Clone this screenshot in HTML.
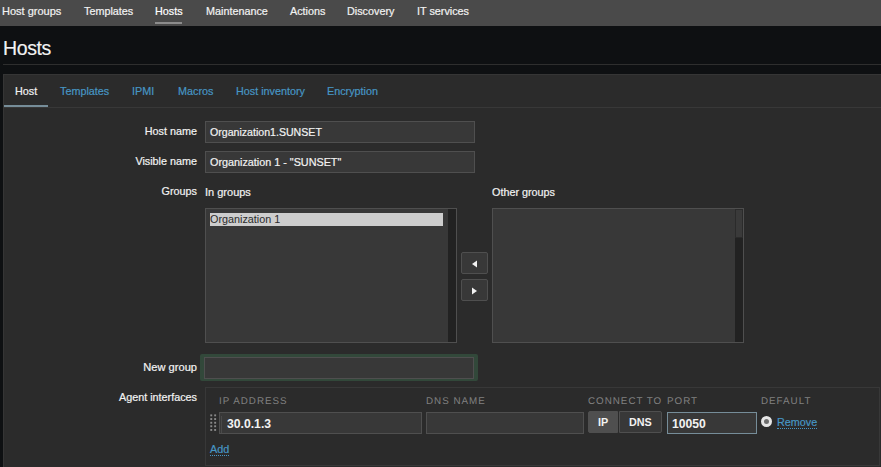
<!DOCTYPE html>
<html><head><meta charset="utf-8">
<style>
*{box-sizing:border-box;margin:0;padding:0}
html,body{width:881px;height:467px;overflow:hidden;background:#0e1012;font-family:"Liberation Sans",sans-serif;font-size:10.8px;color:#f2f2f2}
.a{position:absolute;white-space:nowrap;line-height:13px;-webkit-text-stroke:0.2px currentColor}
.r{position:absolute}
#nav{position:absolute;left:0;top:0;width:881px;height:26px;background:#4a4a4a}
#nav .a{top:5px;color:#f2f2f2}
#navsel{position:absolute;left:155px;top:22px;width:27px;height:2px;background:#8c8c8c}
#title{position:absolute;left:3px;top:37px;font-size:19.5px;line-height:22px;color:#f2f2f2;letter-spacing:-0.4px;-webkit-text-stroke:0.15px #f2f2f2}
#tline{position:absolute;left:3px;top:64px;width:878px;height:1px;background:#2e2e2e}
#cont{position:absolute;left:3px;top:74px;width:900px;height:420px;background:#2b2b2b;border:1px solid #353535}
.tab{top:85px;color:#4796c4}
#tabsel{position:absolute;left:4px;top:105px;width:44px;height:2px;background:#768d99}
#tabline{position:absolute;left:4px;top:107px;width:877px;height:1px;background:#383838}
.lbl{color:#f2f2f2}
.inp{position:absolute;background:#383838;border:1px solid #4f4f4f}
.list{position:absolute;background:#383838;border:1px solid #4f4f4f}
.btn{position:absolute;background:#383838;border:1px solid #4f4f4f;border-radius:2px}
.hdr{color:#808080;font-size:9.8px;letter-spacing:1px;text-rendering:geometricPrecision;-webkit-text-stroke:0}
.link{color:#4796c4;border-bottom:1px dotted #4796c4;line-height:12px}
.val{font-size:12.2px;font-weight:bold;-webkit-text-stroke:0}
</style></head><body>
<div id="nav">
  <div class="a" style="left:2px;font-size:11px">Host groups</div>
  <div class="a" style="left:84px">Templates</div>
  <div class="a" style="left:155px;color:#fff">Hosts</div>
  <div class="a" style="left:206px">Maintenance</div>
  <div class="a" style="left:290px">Actions</div>
  <div class="a" style="left:347px">Discovery</div>
  <div class="a" style="left:417px">IT services</div>
</div>
<div id="navsel"></div>
<div id="title">Hosts</div>
<div id="tline"></div>
<div id="cont"></div>
<div class="a tab" style="left:15px;color:#f2f2f2">Host</div>
<div class="a tab" style="left:60px">Templates</div>
<div class="a tab" style="left:132px">IPMI</div>
<div class="a tab" style="left:178px">Macros</div>
<div class="a tab" style="left:236px">Host inventory</div>
<div class="a tab" style="left:327px">Encryption</div>
<div id="tabsel"></div>
<div id="tabline"></div>

<div class="a lbl" style="right:684px;top:125px">Host name</div>
<div class="inp" style="left:205px;top:121px;width:270px;height:22px"></div>
<div class="a" style="left:210px;top:126px;font-size:10.6px">Organization1.SUNSET</div>

<div class="a lbl" style="right:684px;top:155px">Visible name</div>
<div class="inp" style="left:205px;top:151px;width:270px;height:22px"></div>
<div class="a" style="left:210px;top:156px">Organization 1 - "SUNSET"</div>

<div class="a lbl" style="right:684px;top:185px">Groups</div>
<div class="a" style="left:205px;top:186px;font-size:11px">In groups</div>
<div class="a" style="left:492px;top:186px">Other groups</div>

<div class="list" style="left:205px;top:208px;width:252px;height:135px"></div>
<div class="r" style="left:448px;top:209px;width:8px;height:133px;background:#222"></div>
<div class="r" style="left:210px;top:213px;width:233px;height:13px;background:#cdcdcd"></div>
<div class="a" style="left:210px;top:213px;color:#2b2b2b;-webkit-text-stroke:0">Organization 1</div>

<div class="btn" style="left:461px;top:252px;width:27px;height:22px"></div>
<svg class="r" style="left:471px;top:260px" width="7" height="8"><path d="M1 4 L6 0.5 L6 7.5 Z" fill="#f2f2f2"/></svg>
<div class="btn" style="left:461px;top:279px;width:27px;height:22px"></div>
<svg class="r" style="left:471px;top:287px" width="7" height="8"><path d="M6 4 L1 0.5 L1 7.5 Z" fill="#f2f2f2"/></svg>

<div class="list" style="left:492px;top:208px;width:252px;height:135px"></div>
<div class="r" style="left:735px;top:209px;width:8px;height:133px;background:#222"></div>
<div class="r" style="left:735px;top:209px;width:8px;height:29px;background:#3a3a3a;border:1px solid #2b2b2b"></div>

<div class="a lbl" style="right:684px;top:361px;font-size:11.1px">New group</div>
<div class="r" style="left:200px;top:354px;width:278px;height:27px;background:#32483a;border-radius:2px"></div>
<div class="inp" style="left:204px;top:357px;width:270px;height:22px"></div>

<div class="a lbl" style="right:684px;top:391px">Agent interfaces</div>
<div class="r" style="left:205px;top:387px;width:675px;height:79px;border:1px solid #383838"></div>
<div class="a hdr" style="left:219px;top:395px">IP ADDRESS</div>
<div class="a hdr" style="left:426px;top:395px">DNS NAME</div>
<div class="a hdr" style="left:588px;top:395px">CONNECT TO</div>
<div class="a hdr" style="left:667px;top:395px">PORT</div>
<div class="a hdr" style="left:761px;top:395px">DEFAULT</div>

<svg class="r" style="left:210px;top:414px" width="8" height="18">
  <g fill="#8a8a8a"><rect x="0.3" y="0.4" width="1.9" height="1.9"/><rect x="4.2" y="0.4" width="1.9" height="1.9"/>
  <rect x="0.3" y="4.1" width="1.9" height="1.9"/><rect x="4.2" y="4.1" width="1.9" height="1.9"/>
  <rect x="0.3" y="7.8" width="1.9" height="1.9"/><rect x="4.2" y="7.8" width="1.9" height="1.9"/>
  <rect x="0.3" y="11.3" width="1.9" height="1.9"/><rect x="4.2" y="11.3" width="1.9" height="1.9"/>
  <rect x="0.3" y="15" width="1.9" height="1.9"/><rect x="4.2" y="15" width="1.9" height="1.9"/></g>
</svg>
<div class="inp" style="left:219px;top:412px;width:203px;height:22px"></div>
<div class="r" style="left:221px;top:416px;width:1px;height:17px;background:#4a4a4a"></div>
<div class="a val" style="left:227px;top:418px">30.0.1.3</div>
<div class="inp" style="left:426px;top:412px;width:158px;height:22px"></div>
<div class="btn" style="left:588px;top:411px;width:30px;height:22px;background:#4f4f4f;border-color:#4f4f4f;border-radius:2px 0 0 2px"></div>
<div class="a" style="left:598px;top:416px;font-weight:bold;-webkit-text-stroke:0">IP</div>
<div class="btn" style="left:619px;top:411px;width:43px;height:22px;border-radius:0 2px 2px 0"></div>
<div class="a" style="left:629px;top:416px;font-weight:bold;-webkit-text-stroke:0">DNS</div>
<div class="inp" style="left:667px;top:412px;width:90px;height:22px;border-color:#768d99"></div>
<div class="a val" style="left:672px;top:418px">10050</div>
<div class="r" style="left:761px;top:416px;width:11px;height:11px;border-radius:50%;border:3px solid #e6e6e6;background:#6e6e6e"></div>
<div class="a link" style="left:777px;top:416px">Remove</div>
<div class="a link" style="left:210px;top:443px">Add</div>
</body></html>
